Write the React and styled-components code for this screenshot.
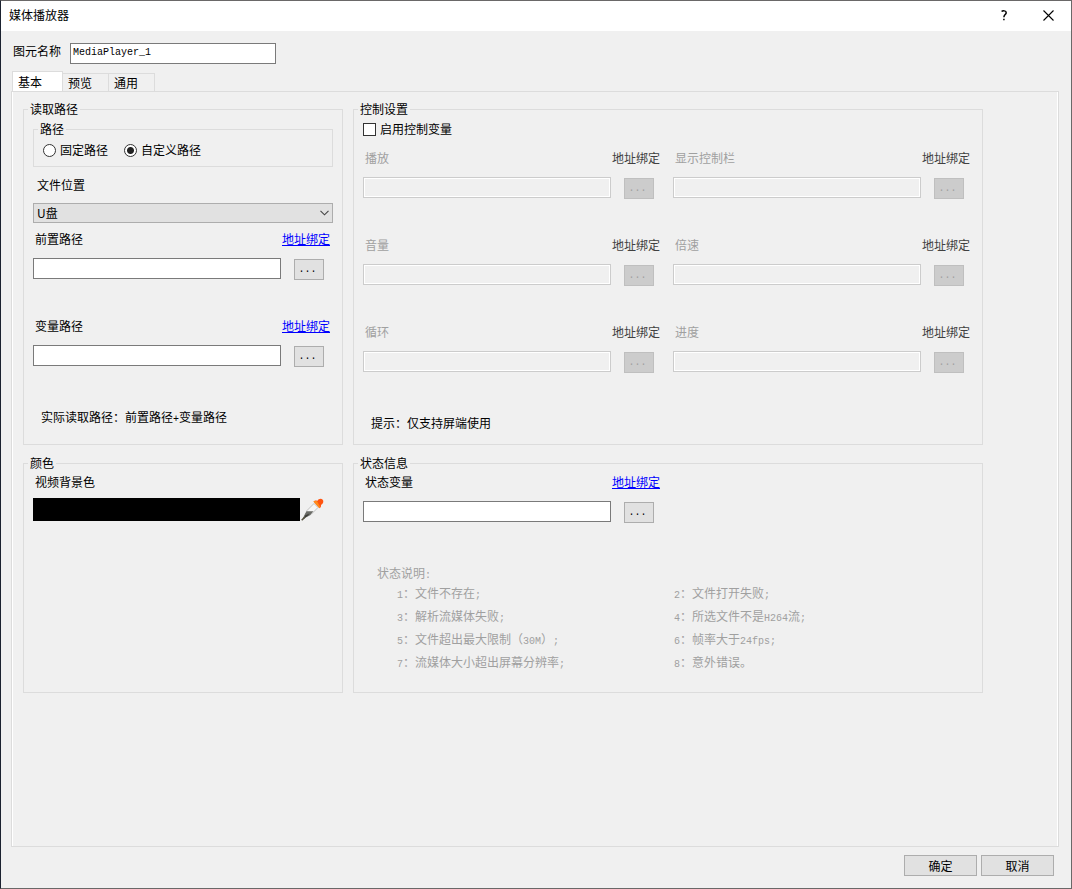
import React, { useId, useState } from "react";
import styled, { createGlobalStyle, css } from "styled-components";

const GlobalStyle = createGlobalStyle`
  *, *::before, *::after { box-sizing: border-box; }
  body {
    margin: 0;
    background: #f0f0f0;
    color: #000;
    font: 12px/16px "Noto Sans CJK SC", sans-serif;
  }
  button, input, select { font: inherit; color: inherit; margin: 0; }
`;

const Dialog = styled.main`
  display: flex;
  flex-direction: column;
  min-height: 100vh;
  border: 1px solid #6a6868;
  border-left-color: #1b2230;
`;

const TitleBar = styled.header`
  display: flex;
  align-items: center;
  height: 30px;
  padding: 0 0 2px 8px;
  background: #fff;
`;

const Title = styled.h1`
  flex: 1;
  margin: 0;
  font-size: 12px;
  font-weight: 400;
`;

const TitleButton = styled.button`
  display: grid;
  place-items: center;
  width: 45px;
  height: 28px;
  padding: 0;
  border: 0;
  background: none;
`;

const NameRow = styled.div`
  display: flex;
  align-items: flex-start;
  gap: 9px;
  padding: 12px 12px 7px;
`;

const inputBase = css`
  height: 21px;
  min-width: 0;
  padding: 0 2px;
  border: 1px solid #7a7a7a;
  border-radius: 0;
  background: #fff;
  outline: none;

  &:disabled {
    border-color: #cccccc;
    background: #f0f0f0;
    box-shadow: inset 0 0 0 1px #fff;
  }
`;

const NameInput = styled.input`
  ${inputBase}
  width: 206px;
  padding-bottom: 2px;
  font-family: "Liberation Mono", monospace;
  font-size: 10px;
`;

const TabList = styled.div`
  display: flex;
  align-items: flex-end;
  height: 20px;
  padding-left: 11px;
`;

const Tab = styled.button`
  width: ${(p) => (p.$active ? 51 : 46)}px;
  height: ${(p) => (p.$active ? 20 : 18)}px;
  padding: 0 0 0 5px;
  border: 1px solid #dcdcdc;
  border-left-width: ${(p) => (p.$active ? 1 : 0)}px;
  border-bottom: 0;
  background: ${(p) => (p.$active ? "#fff" : "#f0f0f0")};
  text-align: left;
`;

const Pane = styled.section`
  flex: 1;
  margin: 0 12px 0 10px;
  padding: 9px 75px 20px 10px;
  border: 1px solid #dcdcdc;
  box-shadow: inset 1px 0 #fff, inset -1px 0 #fff;
`;

const Groups = styled.div`
  display: grid;
  grid-template-columns: minmax(0, 320fr) minmax(0, 630fr);
  gap: 10px;
  padding-left: 1px;
`;

const Group = styled.fieldset`
  min-width: 0;
  margin: 0;
  padding: 0;
  border: 1px solid #dcdcdc;
`;

const Legend = styled.legend`
  margin-left: 4px;
  padding: 0 2px 2px;
  line-height: 15px;
`;

const GroupBody = styled.div`
  min-height: ${(p) => p.$minHeight || 0}px;
  padding: ${(p) => p.$top || 3}px 9px 0;
`;

const RadioRow = styled.div`
  display: flex;
  gap: 16px;
  height: 28px;
  padding: 4px 9px 0;
`;

const Choice = styled.label`
  display: inline-flex;
  align-items: center;
  gap: 4px;
  height: 16px;
`;

const Radio = styled.input`
  appearance: none;
  width: 13px;
  height: 13px;
  border: 1px solid #333;
  border-radius: 50%;
  background: #fff;

  &:checked {
    background: radial-gradient(circle, #222 0 3px, #fff 4px);
  }
`;

const Checkbox = styled.input`
  appearance: none;
  width: 13px;
  height: 13px;
  border: 1px solid #333;
  background: #fff;

  &:checked {
    background: #333;
    box-shadow: inset 0 0 0 2px #fff;
  }
`;

const BlockLabel = styled.label`
  display: block;
  padding: 0 4px;
  margin: 10px 0;
`;

const SelectBox = styled.div`
  position: relative;

  svg {
    position: absolute;
    right: 4px;
    top: 7px;
    pointer-events: none;
  }
`;

const Select = styled.select`
  appearance: none;
  display: block;
  width: 100%;
  height: 20px;
  padding: 0 20px 0 3px;
  border: 1px solid #adadad;
  border-radius: 0;
  background: #e1e1e1;
`;

const FieldGrid = styled.div`
  display: grid;
  grid-template-columns: repeat(${(p) => p.$columns || 1}, minmax(0, 1fr));
  gap: 38px 10px;
  margin-top: ${(p) => p.$top || 0}px;
`;

const FieldHead = styled.div`
  display: flex;
  justify-content: space-between;
  padding: 0 3px 0 2px;
  margin-bottom: ${(p) => (p.$tight ? 8 : 11)}px;
`;

const FieldLabel = styled.label`
  color: ${(p) => (p.$disabled ? "#a0a0a0" : "#000")};
`;

const BindLink = styled.a`
  color: #0000ff;
  text-decoration: underline;

  &[aria-disabled="true"] {
    color: #404040;
    text-decoration: none;
  }
`;

const FieldRow = styled.div`
  display: flex;
  gap: 13px;
  height: 22px;
  padding-right: 9px;
`;

const TextInput = styled.input`
  ${inputBase}
  flex: 1;
`;

const Button = styled.button`
  width: 73px;
  height: 21px;
  padding: 0;
  border: 1px solid #adadad;
  background: #e1e1e1;
  line-height: 19px;

  &:disabled {
    border-color: #bfbfbf;
    background: #cccccc;
    color: #a0a0a0;
  }
`;

const BrowseButton = styled(Button)`
  align-self: flex-end;
  width: 30px;
  padding-right: 3px;
  font-family: "Liberation Mono", monospace;
  font-size: 10px;
`;

const Note = styled.p`
  margin: 42px 0 13px;
  padding: 0 8px;
`;

const SwatchRow = styled.div`
  display: flex;
  gap: 1px;
  padding-right: 9px;
`;

const Swatch = styled.button`
  flex: 1;
  height: 23px;
  border: 0;
  background: #000;
`;

const PickerButton = styled.button`
  width: 23px;
  height: 23px;
  padding: 0;
  border: 0;
  background: none;

  svg { display: block; }
`;

const StatusHelp = styled.div`
  margin-top: 42px;
  padding-left: 14px;
  color: #a0a0a0;
`;

const StatusList = styled.ul`
  display: grid;
  grid-template-columns: 277fr 299fr;
  margin: 0;
  padding: 0 0 0 20px;
  list-style: none;
  line-height: 23px;
`;

const Latin = styled.span`
  font-family: "Liberation Mono", monospace;
  font-size: 10px;
  line-height: 1;
`;

const Footer = styled.footer`
  display: flex;
  justify-content: flex-end;
  gap: 4px;
  padding: 8px 17px 12px;
`;

function Field({ label, disabled }) {
  const id = useId();
  return (
    <div>
      <FieldHead>
        <FieldLabel htmlFor={id} $disabled={disabled}>{label}</FieldLabel>
        <BindLink href="#bind" aria-disabled={disabled ? "true" : undefined}>地址绑定</BindLink>
      </FieldHead>
      <FieldRow>
        <TextInput id={id} type="text" disabled={disabled} />
        <BrowseButton type="button" disabled={disabled}>...</BrowseButton>
      </FieldRow>
    </div>
  );
}

function CloseIcon() {
  return (
    <svg width="11" height="11" viewBox="0 0 11 11" fill="none" stroke="#000" strokeWidth="1.1">
      <path d="M.5 .5l10 10M10.5 .5l-10 10" />
    </svg>
  );
}

function HelpIcon() {
  return (
    <svg width="8" height="11" viewBox="0 0 8 11" fill="none" stroke="#000" strokeWidth="1.5">
      <path d="M1.6 1.6C2.6.5 6.2.4 6.2 2.7 6.2 4.6 3.9 4.5 3.9 7.2" />
      <path d="M3.9 8.7v1.6" />
    </svg>
  );
}

function ChevronIcon() {
  return (
    <svg width="9" height="6" viewBox="0 0 9 6" fill="none" stroke="#444" strokeWidth="1.1">
      <path d="M.5 .8l4 4 4-4" />
    </svg>
  );
}

function PipetteIcon() {
  return (
    <svg width="23" height="23" viewBox="0 0 23 23">
      <path d="M13 5.5L17 9.5 10 16.5 6 18 4.5 17 6 12.5z" fill="#f6f6f6" stroke="#b4b4b4" strokeWidth=".8" />
      <path d="M5.6 13.2L12.4 13.2 9.5 16.8C7 18.6 5 19 3 21L1.5 20.5C3.2 18 4 15.5 5.6 13.2z" fill="#6a6b66" />
      <path d="M4 17.5L8.5 15.5 6.5 18 3.5 20z" fill="#3c3c36" />
      <path d="M.7 22.3L3.8 19.2" stroke="#55513f" strokeWidth="1.6" />
      <path d="M12.5 3.5C14 2.2 15.5 2.6 16.2 3 17.5.8 20 .3 21.5 1.4 23 3 22.5 5.5 20 7 20.3 8.5 19.5 9.7 18.500 10.300z" fill="#ff5410" />
      <path d="M12.5 3.5C13.5 2.4 15 2.6 16 3.2L19 8.5 18.5 10.3z" fill="#ff8c1c" />
    </svg>
  );
}

const TABS = ["基本", "预览", "通用"];
const CONTROLS = ["播放", "显示控制栏", "音量", "倍速", "循环", "进度"];
const STATUSES = [
  <>文件不存在<Latin>;</Latin></>,
  <>文件打开失败<Latin>;</Latin></>,
  <>解析流媒体失败<Latin>;</Latin></>,
  <>所选文件不是<Latin>H264</Latin>流<Latin>;</Latin></>,
  <>文件超出最大限制（<Latin>30M</Latin>）<Latin>;</Latin></>,
  <>帧率大于<Latin>24fps;</Latin></>,
  <>流媒体大小超出屏幕分辨率<Latin>;</Latin></>,
  <>意外错误。</>,
];

export default function App() {
  const [tab, setTab] = useState(0);
  const [enabled, setEnabled] = useState(false);

  return (
    <Dialog>
      <GlobalStyle />
      <TitleBar>
        <Title>媒体播放器</Title>
        <TitleButton type="button" aria-label="帮助"><HelpIcon /></TitleButton>
        <TitleButton type="button" aria-label="关闭"><CloseIcon /></TitleButton>
      </TitleBar>

      <NameRow>
        <label htmlFor="element-name">图元名称</label>
        <NameInput id="element-name" type="text" defaultValue="MediaPlayer_1" />
      </NameRow>

      <TabList role="tablist">
        {TABS.map((name, i) => (
          <Tab key={name} type="button" role="tab" aria-selected={i === tab} $active={i === tab} onClick={() => setTab(i)}>
            {name}
          </Tab>
        ))}
      </TabList>

      <Pane role="tabpanel">
        <Groups>
          <Group>
            <Legend>读取路径</Legend>
            <GroupBody>
              <Group>
                <Legend>路径</Legend>
                <RadioRow>
                  <Choice><Radio type="radio" name="path-kind" />固定路径</Choice>
                  <Choice><Radio type="radio" name="path-kind" defaultChecked />自定义路径</Choice>
                </RadioRow>
              </Group>
              <BlockLabel htmlFor="file-location">文件位置</BlockLabel>
              <SelectBox>
                <Select id="file-location" defaultValue="usb">
                  <option value="usb">U盘</option>
                </Select>
                <ChevronIcon />
              </SelectBox>
              <FieldGrid $top={8}>
                <Field label="前置路径" />
                <Field label="变量路径" />
              </FieldGrid>
              <Note>实际读取路径：前置路径<Latin>+</Latin>变量路径</Note>
            </GroupBody>
          </Group>

          <Group>
            <Legend>控制设置</Legend>
            <GroupBody>
              <Choice>
                <Checkbox type="checkbox" checked={enabled} onChange={(e) => setEnabled(e.target.checked)} />
                启用控制变量
              </Choice>
              <FieldGrid $columns={2} $top={11}>
                {CONTROLS.map((label) => (
                  <Field key={label} label={label} disabled={!enabled} />
                ))}
              </FieldGrid>
              <Note>提示：仅支持屏端使用</Note>
            </GroupBody>
          </Group>

          <Group>
            <Legend>颜色</Legend>
            <GroupBody $top={2} $minHeight={220}>
              <FieldHead $tight>
                <FieldLabel htmlFor="video-background">视频背景色</FieldLabel>
              </FieldHead>
              <SwatchRow>
                <Swatch id="video-background" type="button" />
                <PickerButton type="button" aria-label="取色"><PipetteIcon /></PickerButton>
              </SwatchRow>
            </GroupBody>
          </Group>

          <Group>
            <Legend>状态信息</Legend>
            <GroupBody $top={2}>
              <FieldGrid $columns={2}>
                <Field label="状态变量" />
              </FieldGrid>
              <StatusHelp>
                状态说明<Latin>:</Latin>
                <StatusList>
                  {STATUSES.map((text, i) => (
                    <li key={i}><Latin>{i + 1}</Latin>：{text}</li>
                  ))}
                </StatusList>
              </StatusHelp>
            </GroupBody>
          </Group>
        </Groups>
      </Pane>

      <Footer>
        <Button type="button">确定</Button>
        <Button type="button">取消</Button>
      </Footer>
    </Dialog>
  );
}
